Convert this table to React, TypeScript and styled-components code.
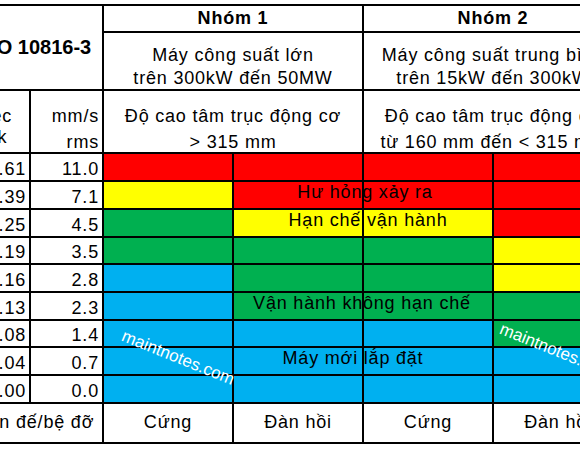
import React from 'react';
import styled, { createGlobalStyle } from 'styled-components';

type Level = 'r' | 'y' | 'g' | 'b';

const COLORS: Record<Level, string> = {
  r: '#ff0000',
  y: '#ffff00',
  g: '#00b050',
  b: '#00b0f0',
};

const ROWS: { ips: string; mms: string; zones: Level[] }[] = [
  { ips: '0.61', mms: '11.0', zones: ['r', 'r', 'r', 'r'] },
  { ips: '0.39', mms: '7.1', zones: ['y', 'r', 'r', 'r'] },
  { ips: '0.25', mms: '4.5', zones: ['g', 'y', 'y', 'r'] },
  { ips: '0.19', mms: '3.5', zones: ['g', 'g', 'g', 'y'] },
  { ips: '0.16', mms: '2.8', zones: ['b', 'g', 'g', 'y'] },
  { ips: '0.13', mms: '2.3', zones: ['b', 'g', 'g', 'g'] },
  { ips: '0.08', mms: '1.4', zones: ['b', 'b', 'b', 'g'] },
  { ips: '0.04', mms: '0.7', zones: ['b', 'b', 'b', 'b'] },
  { ips: '0.00', mms: '0.0', zones: ['b', 'b', 'b', 'b'] },
];

// labels lie across the middle two columns (grid row = data row + 3)
const LABELS = [
  { text: 'Hư hỏng xảy ra', row: 5, shift: 2 },
  { text: 'Hạn chế vận hành', row: 6, shift: 5 },
  { text: 'Vận hành không hạn chế', row: 9, shift: -1 },
  { text: 'Máy mới lắp đặt', row: 11, shift: -10 },
];

const GlobalStyle = createGlobalStyle`
  html, body {
    margin: 0;
    background: #fff;
    overflow: hidden;
  }
  body {
    font-family: "Liberation Sans", Arial, sans-serif;
    color: #000;
  }
`;

const App: React.FC = () => (
  <>
    <GlobalStyle />
    <Sheet>
      <TitleCell>ISO 10816-3</TitleCell>
      <GroupCell>Nhóm 1</GroupCell>
      <GroupCell>Nhóm 2</GroupCell>

      <DescCell $lh={23} $pt={11}>
        Máy công suất lớn
        <br />
        trên 300kW đến 50MW
      </DescCell>
      <DescCell $lh={23} $pt={11}>
        Máy công suất trung bình
        <br />
        trên 15kW đến 300kW
      </DescCell>

      <UnitCell $lh={21} $pt={15} $pr={17} $align="center">
        in/sec
        <br />
        peak
      </UnitCell>
      <UnitCell $lh={26} $pt={12} $pr={3} $align="right">
        mm/s
        <br />
        rms
      </UnitCell>
      <DescCell $lh={26} $pt={12}>
        Độ cao tâm trục động cơ
        <br />
        &gt; 315 mm
      </DescCell>
      <DescCell $lh={26} $pt={12}>
        Độ cao tâm trục động cơ
        <br />
        từ 160 mm đến &lt; 315 mm
      </DescCell>

      {ROWS.map((row) => (
        <React.Fragment key={row.mms}>
          <ValueCell>{row.ips}</ValueCell>
          <ValueCell>{row.mms}</ValueCell>
          {row.zones.map((z, i) => (
            <ZoneCell key={i} $bg={COLORS[z]} />
          ))}
        </React.Fragment>
      ))}

      <FootCell $span={2}>Nền đế/bệ đỡ</FootCell>
      <FootCell>Cứng</FootCell>
      <FootCell>Đàn hồi</FootCell>
      <FootCell>Cứng</FootCell>
      <FootCell>Đàn hồi</FootCell>

      {LABELS.map((l) => (
        <ZoneLabel key={l.text} $row={l.row} $shift={l.shift}>
          {l.text}
        </ZoneLabel>
      ))}

      <Watermark $x={213} $y={354}>maintnotes.com</Watermark>
      <Watermark $x={591} $y={347}>maintnotes.com</Watermark>
    </Sheet>
  </>
);

const Sheet = styled.div`
  position: relative;
  display: grid;
  grid-template-columns: 62px 71px repeat(4, 128px);
  grid-template-rows: 25px 56px 61px 26px 26px 26px 25px 26px 26px 25px 26px 26px 38px;
  gap: 2px;
  padding: 2px;
  width: max-content;
  margin: 4px 0 0 -35px;
  background: #000;
  font-size: 18px;
  letter-spacing: 0.8px;
`;

const Cell = styled.div`
  background: #fff;
  overflow: hidden;
  white-space: nowrap;
`;

const TitleCell = styled(Cell)`
  grid-column: span 2;
  grid-row: span 2;
  display: flex;
  align-items: center;
  justify-content: center;
  font-size: 20px;
  font-weight: bold;
  letter-spacing: 0;
`;

const GroupCell = styled(Cell)`
  grid-column: span 2;
  display: flex;
  align-items: center;
  justify-content: center;
  font-weight: bold;
`;

const DescCell = styled(Cell)<{ $lh: number; $pt: number }>`
  grid-column: span 2;
  text-align: center;
  line-height: ${(p) => p.$lh}px;
  padding-top: ${(p) => p.$pt}px;
`;

const UnitCell = styled(Cell)<{ $lh: number; $pt: number; $pr: number; $align: string }>`
  display: flex;
  justify-content: flex-end;
  text-align: ${(p) => p.$align};
  line-height: ${(p) => p.$lh}px;
  padding: ${(p) => p.$pt}px ${(p) => p.$pr}px 0 0;
`;

const ValueCell = styled(Cell)`
  display: flex;
  align-items: flex-end;
  justify-content: flex-end;
  padding-right: 3px;
`;

const ZoneCell = styled.div<{ $bg: string }>`
  background: ${(p) => p.$bg};
`;

const FootCell = styled(Cell)<{ $span?: number }>`
  grid-column: span ${(p) => p.$span ?? 1};
  display: flex;
  align-items: center;
  justify-content: center;
  padding-bottom: 2px;
`;

// the column rule between the two middle cells runs over the label text
const ZoneLabel = styled.div<{ $row: number; $shift: number }>`
  position: absolute;
  inset: 0;
  grid-column: 4 / 6;
  grid-row: ${(p) => p.$row} / ${(p) => p.$row + 1};
  display: flex;
  align-items: center;
  justify-content: center;
  padding: 0 ${(p) => Math.max(0, -2 * p.$shift)}px 6px ${(p) => Math.max(0, 2 * p.$shift)}px;
  white-space: nowrap;
  pointer-events: none;

  &::after {
    content: '';
    position: absolute;
    left: 128px;
    top: 0;
    bottom: 0;
    width: 2px;
    background: #000;
  }
`;

const Watermark = styled.div<{ $x: number; $y: number }>`
  position: absolute;
  left: ${(p) => p.$x}px;
  top: ${(p) => p.$y}px;
  transform: translate(-50%, -50%) rotate(22deg);
  color: #fff;
  font-size: 17px;
  letter-spacing: 0;
  white-space: nowrap;
  pointer-events: none;
`;

export default App;
